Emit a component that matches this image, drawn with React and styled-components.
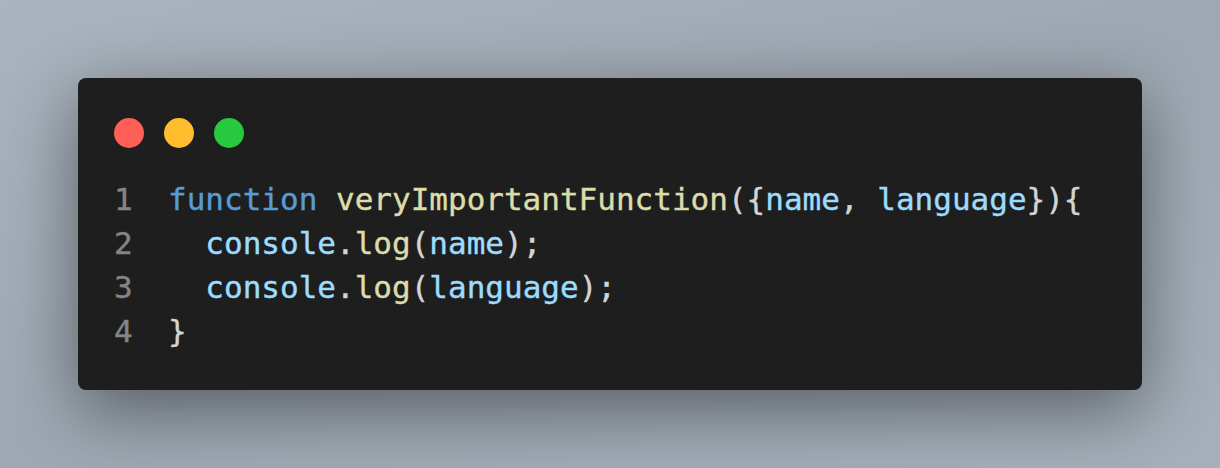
import React from 'react';
import styled, { createGlobalStyle } from 'styled-components';

const GlobalStyle = createGlobalStyle`
  html, body {
    margin: 0;
    padding: 0;
    width: 100%;
    height: 100%;
  }
  body {
    background: linear-gradient(160deg, #aab4be 0%, #9ea8b2 50%, #a6b0ba 100%);
    overflow: hidden;
  }
  #root {
    width: 100%;
    height: 100%;
  }
`;

const lines = [
  [
    { t: 'function', c: 'keyword' },
    { t: ' ', c: 'plain' },
    { t: 'veryImportantFunction', c: 'fn' },
    { t: '({', c: 'plain' },
    { t: 'name', c: 'var' },
    { t: ', ', c: 'plain' },
    { t: 'language', c: 'var' },
    { t: '}){', c: 'plain' },
  ],
  [
    { t: '  ', c: 'plain' },
    { t: 'console', c: 'var' },
    { t: '.', c: 'plain' },
    { t: 'log', c: 'fn' },
    { t: '(', c: 'plain' },
    { t: 'name', c: 'var' },
    { t: ');', c: 'plain' },
  ],
  [
    { t: '  ', c: 'plain' },
    { t: 'console', c: 'var' },
    { t: '.', c: 'plain' },
    { t: 'log', c: 'fn' },
    { t: '(', c: 'plain' },
    { t: 'language', c: 'var' },
    { t: ');', c: 'plain' },
  ],
  [{ t: '}', c: 'plain' }],
];

const colors = {
  keyword: '#569cd6',
  fn: '#dcdcaa',
  var: '#9cdcfe',
  plain: '#d4d4d4',
};

const App = () => {
  return (
    <>
      <GlobalStyle />
      <Page>
        <Window>
          <Dots>
            <Dot color="#ff5f56" />
            <Dot color="#ffbd2e" />
            <Dot color="#27c93f" />
          </Dots>
          <Code>
            {lines.map((tokens, i) => (
              <Line key={i}>
                <LineNumber>{i + 1}</LineNumber>
                <Source>
                  {tokens.map((tok, j) => (
                    <Token key={j} kind={tok.c}>{tok.t}</Token>
                  ))}
                </Source>
              </Line>
            ))}
          </Code>
        </Window>
      </Page>
    </>
  );
};

export default App;

const Page = styled.div`
  width: 100%;
  height: 100%;
  box-sizing: border-box;
  padding: 78px 78px 0 78px;
  display: flex;
  align-items: flex-start;
`;

const Window = styled.div`
  width: 1064px;
  height: 312px;
  box-sizing: border-box;
  background: #1e1e1e;
  border-radius: 8px;
  padding: 40px 36px 0 36px;
  box-shadow: 0 20px 70px rgba(0, 0, 0, 0.45);
`;

const Dots = styled.div`
  display: flex;
  gap: 20px;
`;

const Dot = styled.span`
  width: 30px;
  height: 30px;
  border-radius: 50%;
  background: ${({ color }) => color};
`;

const Code = styled.div`
  margin-top: 29px;
  font-family: 'DejaVu Sans Mono', 'Liberation Mono', monospace;
  font-size: 31px;
  line-height: 44px;
  -webkit-text-stroke: 0.4px currentColor;
`;

const Line = styled.div`
  display: flex;
  white-space: pre;
`;

const LineNumber = styled.span`
  width: 54px;
  flex-shrink: 0;
  color: #858585;
`;

const Source = styled.span`
  white-space: pre;
`;

const Token = styled.span`
  color: ${({ kind }) => colors[kind]};
`;
